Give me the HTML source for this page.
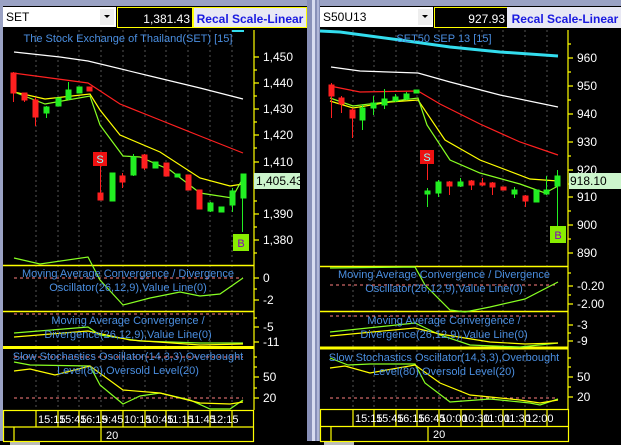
<!DOCTYPE html>
<html><head><meta charset="utf-8"><style>
html,body{margin:0;padding:0;width:621px;height:445px;overflow:hidden;background:#000;}
svg{display:block;font-family:"Liberation Sans",sans-serif;}
</style></head><body>
<svg width="621" height="445" viewBox="0 0 621 445" xmlns="http://www.w3.org/2000/svg">
<rect width="621" height="445" fill="#000"/>
<!-- top strip -->
<rect x="0" y="0" width="621" height="6" fill="#9aa2c4"/>
<rect x="0" y="0" width="3" height="445" fill="#9aa2c4"/>
<!-- separator -->
<rect x="307" y="0" width="13" height="445" fill="#8890b8"/>
<rect x="312" y="0" width="3" height="445" fill="#d8dcf0"/>
<rect x="317" y="0" width="2" height="445" fill="#b0b6d8"/>
<rect x="0" y="441" width="621" height="4" fill="#000"/>
<rect x="10" y="442" width="30" height="3" fill="#bbb"/>
<rect x="324" y="442" width="30" height="3" fill="#bbb"/>

<!-- LEFT HEADER -->
<rect x="3" y="7" width="113" height="20" fill="#fff"/>
<text x="6" y="21" font-size="12" fill="#000">SET</text>
<rect x="100" y="9" width="14" height="16" fill="#eee"/>
<path d="M104 15h6l-3 3z" fill="#000"/>
<rect x="117.5" y="7.5" width="75" height="20" fill="#000" stroke="#ffff00"/>
<text x="190" y="23" font-size="12" fill="#fff" text-anchor="end">1,381.43</text>
<rect x="193" y="7" width="114" height="21" fill="#ffff00"/>
<rect x="194" y="8" width="112" height="19" fill="#e8e8f4"/>
<text x="250" y="23" font-size="12" font-weight="bold" fill="#1a1ae0" text-anchor="middle">Recal Scale-Linear</text>

<!-- RIGHT HEADER -->
<rect x="320" y="7" width="113" height="20" fill="#fff"/>
<text x="323" y="21" font-size="12" fill="#000">S50U13</text>
<rect x="418" y="9" width="14" height="16" fill="#eee"/>
<path d="M422 15h6l-3 3z" fill="#000"/>
<rect x="434.5" y="7.5" width="73" height="20" fill="#000" stroke="#ffff00"/>
<text x="505" y="23" font-size="12" fill="#fff" text-anchor="end">927.93</text>
<rect x="507" y="7" width="114" height="21" fill="#e8e8f4"/>
<text x="565" y="23" font-size="12" font-weight="bold" fill="#1a1ae0" text-anchor="middle">Recal Scale-Linear</text>

<!-- GRID left -->
<g stroke="#555" stroke-dasharray="2,3" stroke-width="1">
<path d="M36 30V410M58 30V410M79 30V410M101 30V410M123 30V410M145 30V410M166 30V410M188 30V410M210 30V410M232 30V410"/>
<path d="M353 30V409M374 30V409M396 30V409M417 30V409M439 30V409M461 30V409M482 30V409M503 30V409M525 30V409M547 30V409"/>
</g>

<!-- axes -->
<g stroke="#ffff00" stroke-width="1.2">
<path d="M254 30V410"/>
<path d="M568 30V409"/>
<path d="M254 57h5M254 83h5M254 109h5M254 135h5M254 162h5M254 188h5M254 214h5M254 240h5M254 70h3M254 96h3M254 122h3M254 148h3M254 175h3M254 201h3M254 227h3M254 253h3"/>
<path d="M254 278h5M254 300h5M254 289h3M254 327h5M254 342h5M254 318h3M254 377h5M254 398h5M254 357h3M254 367h3M254 388h3"/>
<path d="M568 58h5M568 86h5M568 114h5M568 142h5M568 170h5M568 197h5M568 225h5M568 253h5M568 44h3M568 72h3M568 100h3M568 128h3M568 156h3M568 184h3M568 211h3M568 239h3"/>
<path d="M568 273h3M568 286h5M568 295h3M568 304h5M568 325h5M568 341h5M568 333h3M568 358h3M568 377h5M568 397h5M568 367h3M568 387h3"/>
</g>

<!-- dividers -->
<g stroke="#ffff00">
<path d="M3 265.5H254M3 311.5H254" stroke-width="1.5"/>
<path d="M3 347.5H254" stroke-width="3"/>
<path d="M320 266.5H568M320 311.5H568" stroke-width="1.5"/>
<path d="M320 348H568" stroke-width="3"/>
</g>
<g stroke="#ff8080" stroke-dasharray="3,3">
<path d="M14 278H243M14 314H243M14 357H243M14 398H243"/>
<path d="M330 285H558M330 316H558M330 398H558"/>
</g>

<!-- axis labels -->
<g font-size="12" fill="#fff">
<text x="263" y="61">1,450</text><text x="263" y="87">1,440</text><text x="263" y="113">1,430</text><text x="263" y="139">1,420</text><text x="263" y="166">1,410</text><text x="263" y="218">1,390</text><text x="263" y="244">1,380</text>
<text x="263" y="282">0</text><text x="263" y="304">-2</text><text x="263" y="331">-5</text><text x="263" y="346">-11</text><text x="263" y="381">50</text><text x="263" y="402">20</text>
<text x="577" y="62">960</text><text x="577" y="90">950</text><text x="577" y="118">940</text><text x="577" y="146">930</text><text x="577" y="174">920</text><text x="577" y="201">910</text><text x="577" y="229">900</text><text x="577" y="257">890</text>
<text x="577" y="290">-0.20</text><text x="577" y="308">-2.00</text><text x="577" y="329">-3</text><text x="577" y="345">-9</text><text x="577" y="381">50</text><text x="577" y="401">20</text>
</g>
<rect x="254" y="173" width="46" height="16" fill="#ccf5cc"/>
<text x="256" y="185" font-size="12" fill="#000">1,405.43</text>
<rect x="569" y="173" width="52" height="16" fill="#ccf5cc"/>
<text x="570" y="185" font-size="12" fill="#000">918.10</text>

<!-- LEFT price lines -->
<g fill="none" stroke-width="1.2">
<polyline stroke="#fff" points="14,52 60,57 88,61 150,76 200,88 243,99"/>
<polyline stroke="#ff2020" points="13,73 88,83 120,104 160,120 200,136 243,153"/>
<polyline stroke="#ffff00" points="14,92 45,99 90,94 100,110 120,135 160,152 200,178 230,186 243,184"/>
<polyline stroke="#88ff22" points="14,92 45,104 90,96 100,125 123,156 140,157 170,170 200,193 232,198 243,178"/>
</g>
<!-- left candles -->
<g stroke-width="1">
<g stroke="#ff2020" fill="#ff2020">
<path d="M13.5 72V102M24.5 93V102M35.5 97V126M100.5 165V200M122.5 173V188M144.5 154V170M166.5 163V176M188.5 175V190M199.5 190V209"/>
<rect x="11" y="73" width="5" height="20"/><rect x="22" y="93" width="5" height="7"/><rect x="33" y="100" width="5" height="17"/><rect x="87" y="87" width="5" height="4"/><rect x="98" y="193" width="5" height="7"/><rect x="120" y="176" width="5" height="6"/><rect x="142" y="155" width="5" height="13"/><rect x="164" y="163" width="5" height="13"/><rect x="186" y="175" width="5" height="15"/><rect x="197" y="190" width="5" height="19"/>
</g>
<g stroke="#22ee22" fill="#22ee22">
<path d="M46.5 106V118M68.5 82V100M133.5 154V176M210.5 202V212M232.5 188V212M242.5 198V232"/>
<rect x="44" y="107" width="5" height="6"/><rect x="56" y="98" width="5" height="8"/><rect x="66" y="90" width="5" height="9"/><rect x="77" y="87" width="5" height="6"/><rect x="110" y="173" width="5" height="28"/><rect x="131" y="157" width="5" height="18"/><rect x="153" y="162" width="5" height="6"/><rect x="175" y="174" width="5" height="3"/><rect x="208" y="203" width="5" height="8"/><rect x="219" y="207" width="5" height="5"/><rect x="230" y="191" width="5" height="14"/><rect x="241" y="174" width="5" height="24"/>
</g>
</g>
<rect x="93" y="152" width="14" height="14" fill="#ee1111"/>
<text x="100" y="163" font-size="11" fill="#8ff" text-anchor="middle">S</text>
<rect x="233" y="234" width="16" height="17" fill="#88ee00"/>
<text x="241" y="247" font-size="11" fill="#8000c0" text-anchor="middle">B</text>
<text x="128" y="42" font-size="11" fill="#4a8ee0" text-anchor="middle">The Stock Exchange of Thailand(SET) [15]</text>
<path d="M232 31h12" stroke="#33ddee" stroke-width="2"/>

<!-- LEFT indicators -->
<g fill="none" stroke-width="1.2">
<polyline stroke="#88ff22" points="14,258 40,264 88,257 100,280 123,305 150,298 180,292 200,296 220,294 243,278"/>
<polyline stroke="#88ff22" points="14,333 88,327 100,335 140,341 200,343 243,343"/>
<polyline stroke="#ffff00" points="14,337 88,331 130,340 200,345 243,344"/>
<polyline stroke="#88ff22" points="14,362 30,365 90,366 100,385 123,404 140,396 160,393 190,400 210,409 230,409 243,400"/>
<polyline stroke="#ffff00" points="14,371 30,369 55,375 90,366 123,390 160,393 200,403 230,404 243,402"/>
</g>
<g font-size="11" fill="#4a8ee0" text-anchor="middle">
<text x="128" y="277">Moving Average Convergence / Divergence</text>
<text x="128" y="291">Oscillator(26,12,9),Value Line(0)</text>
<text x="128" y="324">Moving Average Convergence /</text>
<text x="128" y="338">Divergence(26,12,9),Value Line(0)</text>
<text x="128" y="360">Slow Stochastics Oscillator(14,3,3),Overbought</text>
<text x="128" y="374">Level(80),Oversold Level(20)</text>
</g>

<!-- LEFT time box -->
<g fill="none" stroke="#ffff00" stroke-width="1.2">
<rect x="3.5" y="410.5" width="250" height="31"/>
<path d="M3.5 427H253.5M36 410.5V427M58 410.5V427M79 410.5V427M101 410.5V427M123 410.5V427M145 410.5V427M166 410.5V427M188 410.5V427M210 410.5V427M232 410.5V427M14 427V441M101 427V441"/>
</g>
<g font-size="11" fill="#fff">
<text x="38" y="423">15:15</text><text x="59" y="423">15:45</text><text x="80" y="423">16:15</text><text x="102" y="423">9:45</text><text x="124" y="423">10:15</text><text x="146" y="423">10:45</text><text x="167" y="423">11:15</text><text x="189" y="423">11:45</text><text x="211" y="423">12:15</text>
<text x="106" y="439">20</text>
</g>

<!-- RIGHT price lines -->
<polyline fill="none" stroke="#33ddee" stroke-width="3" points="320,31 340,32 400,40 450,47 500,52 558,56"/>
<text x="444" y="42" font-size="11" fill="#4a8ee0" text-anchor="middle">SET50 SEP 13   [15]</text>
<g fill="none" stroke-width="1.2">
<polyline stroke="#fff" points="331,67 360,71 418,73 450,82 500,95 558,107"/>
<polyline stroke="#ff2020" points="330,86 360,92 418,91 440,104 480,124 520,142 558,155"/>
<polyline stroke="#ffff00" points="330,101 353,108 390,102 418,100 445,140 480,160 530,179 558,181"/>
<polyline stroke="#88ff22" points="330,98 353,106 418,98 427,125 450,160 480,173 520,184 545,193 558,186"/>
</g>
<g stroke-width="1">
<g stroke="#ff2020" fill="#ff2020">
<path d="M331.5 83V118M341.5 96V113M352.5 108V138M427.5 160V180M449.5 181V195M471.5 180V190M482.5 178V186M492.5 182V195M525.5 195V207"/>
<rect x="329" y="85" width="5" height="11"/><rect x="339" y="98" width="5" height="6"/><rect x="350" y="110" width="5" height="8"/><rect x="447" y="182" width="5" height="4"/><rect x="469" y="181" width="5" height="4"/><rect x="480" y="183" width="5" height="2"/><rect x="490" y="183" width="5" height="4"/><rect x="501" y="187" width="5" height="3"/><rect x="523" y="196" width="5" height="5"/>
</g>
<g stroke="#22ee22" fill="#22ee22">
<path d="M362.5 105V130M373.5 96V115M384.5 89V109M395.5 94V102M406.5 92V100M427.5 188V207M438.5 180V197M460.5 178V187M514.5 187V198M546.5 176V195M557.5 170V190M557.5 190V227"/>
<rect x="360" y="108" width="5" height="12"/><rect x="371" y="103" width="5" height="5"/><rect x="382" y="99" width="5" height="6"/><rect x="393" y="97" width="5" height="4"/><rect x="404" y="94" width="5" height="5"/><rect x="414" y="90" width="5" height="3"/><rect x="425" y="191" width="5" height="3"/><rect x="436" y="182" width="5" height="11"/><rect x="458" y="182" width="5" height="4"/><rect x="512" y="190" width="5" height="4"/><rect x="534" y="190" width="5" height="12"/><rect x="544" y="190" width="5" height="4"/><rect x="555" y="176" width="5" height="10"/>
</g>
</g>
<rect x="420" y="150" width="14" height="14" fill="#ee1111"/>
<text x="427" y="161" font-size="11" fill="#8ff" text-anchor="middle">S</text>
<rect x="550" y="226" width="16" height="17" fill="#88ee00"/>
<text x="558" y="239" font-size="11" fill="#8000c0" text-anchor="middle">B</text>

<!-- RIGHT indicators -->
<g fill="none" stroke-width="1.2">
<polyline stroke="#88ff22" points="330,268 415,267 425,285 450,310 465,312 490,307 525,299 558,282"/>
<polyline stroke="#88ff22" points="330,332 415,323 440,335 470,345 520,347 558,343"/>
<polyline stroke="#ffff00" points="330,336 415,328 440,334 490,342 525,344 558,343"/>
<polyline stroke="#88ff22" points="330,358 348,365 370,364 415,364 425,383 450,402 490,399 530,403 540,405 558,399"/>
<polyline stroke="#ffff00" points="330,368 345,366 370,373 415,365 440,383 470,395 520,400 540,403 558,400"/>
</g>
<g font-size="11" fill="#4a8ee0" text-anchor="middle">
<text x="444" y="278">Moving Average Convergence / Divergence</text>
<text x="444" y="292">Oscillator(26,12,9),Value Line(0)</text>
<text x="444" y="324">Moving Average Convergence /</text>
<text x="444" y="338">Divergence(26,12,9),Value Line(0)</text>
<text x="444" y="361">Slow Stochastics Oscillator(14,3,3),Overbought</text>
<text x="444" y="375">Level(80),Oversold Level(20)</text>
</g>

<!-- RIGHT time box -->
<g fill="none" stroke="#ffff00" stroke-width="1.2">
<rect x="320.5" y="409.5" width="248" height="32"/>
<path d="M320.5 426.5H568.5M353 409.5V426.5M374 409.5V426.5M396 409.5V426.5M417 409.5V426.5M439 409.5V426.5M461 409.5V426.5M482 409.5V426.5M503 409.5V426.5M525 409.5V426.5M547 409.5V426.5M331 426.5V441M428 426.5V441"/>
</g>
<g font-size="11" fill="#fff">
<text x="355" y="422">15:15</text><text x="376" y="422">15:45</text><text x="397" y="422">16:15</text><text x="418" y="422">16:45</text><text x="440" y="422">10:00</text><text x="462" y="422">10:30</text><text x="483" y="422">11:00</text><text x="504" y="422">11:30</text><text x="526" y="422">12:00</text>
<text x="433" y="438">20</text>
</g>
</svg>
</body></html>
